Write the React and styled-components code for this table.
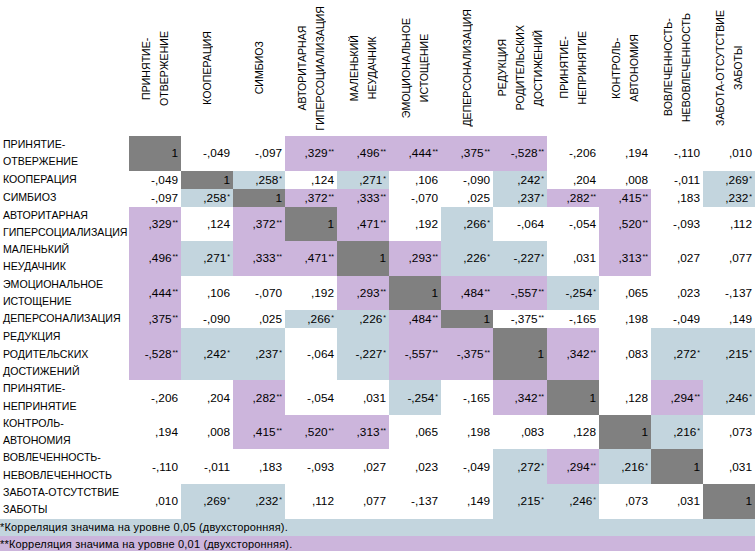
import React from "react";
import styled, { createGlobalStyle } from "styled-components";

const GlobalStyle = createGlobalStyle`
  body {
    margin: 0;
    background: #ffffff;
    font-family: "Liberation Sans", Arial, sans-serif;
    color: #000000;
  }
`;

const colors = {
  diag: "#808080",
  strong: "#ccb5dc",
  weak: "#c3d5de",
  none: "#ffffff",
};

const labels = [
  ["ПРИНЯТИЕ-", "ОТВЕРЖЕНИЕ"],
  ["КООПЕРАЦИЯ"],
  ["СИМБИОЗ"],
  ["АВТОРИТАРНАЯ", "ГИПЕРСОЦИАЛИЗАЦИЯ"],
  ["МАЛЕНЬКИЙ", "НЕУДАЧНИК"],
  ["ЭМОЦИОНАЛЬНОЕ", "ИСТОЩЕНИЕ"],
  ["ДЕПЕРСОНАЛИЗАЦИЯ"],
  ["РЕДУКЦИЯ", "РОДИТЕЛЬСКИХ", "ДОСТИЖЕНИЙ"],
  ["ПРИНЯТИЕ-", "НЕПРИНЯТИЕ"],
  ["КОНТРОЛЬ-", "АВТОНОМИЯ"],
  ["ВОВЛЕЧЕННОСТЬ-", "НЕВОВЛЕЧЕННОСТЬ"],
  ["ЗАБОТА-ОТСУТСТВИЕ", "ЗАБОТЫ"],
];

const matrix = [
  ["1", "-,049", "-,097", ",329**", ",496**", ",444**", ",375**", "-,528**", "-,206", ",194", "-,110", ",010"],
  ["-,049", "1", ",258*", ",124", ",271*", ",106", "-,090", ",242*", ",204", ",008", "-,011", ",269*"],
  ["-,097", ",258*", "1", ",372**", ",333**", "-,070", ",025", ",237*", ",282**", ",415**", ",183", ",232*"],
  [",329**", ",124", ",372**", "1", ",471**", ",192", ",266*", "-,064", "-,054", ",520**", "-,093", ",112"],
  [",496**", ",271*", ",333**", ",471**", "1", ",293**", ",226*", "-,227*", ",031", ",313**", ",027", ",077"],
  [",444**", ",106", "-,070", ",192", ",293**", "1", ",484**", "-,557**", "-,254*", ",065", ",023", "-,137"],
  [",375**", "-,090", ",025", ",266*", ",226*", ",484**", "1", "-,375**", "-,165", ",198", "-,049", ",149"],
  ["-,528**", ",242*", ",237*", "-,064", "-,227*", "-,557**", "-,375**", "1", ",342**", ",083", ",272*", ",215*"],
  ["-,206", ",204", ",282**", "-,054", ",031", "-,254*", "-,165", ",342**", "1", ",128", ",294**", ",246*"],
  [",194", ",008", ",415**", ",520**", ",313**", ",065", ",198", ",083", ",128", "1", ",216*", ",073"],
  ["-,110", "-,011", ",183", "-,093", ",027", ",023", "-,049", ",272*", ",294**", ",216*", "1", ",031"],
  [",010", ",269*", ",232*", ",112", ",077", "-,137", ",149", ",215*", ",246*", ",073", ",031", "1"],
];

// the source sheet leaves this one unshaded
const unshaded = { "6-7": true };

const Table = styled.div`
  display: grid;
  grid-template-columns: 129px repeat(12, 1fr);
  width: 755px;
  font-size: 10.6px;
`;

const HeadCorner = styled.div`
  height: 136px;
`;

const HeadCell = styled.div`
  height: 136px;
  display: flex;
  align-items: center;
  justify-content: center;
`;

const HeadText = styled.div`
  writing-mode: vertical-rl;
  transform: rotate(180deg);
  text-align: center;
  line-height: 18px;
  white-space: nowrap;
`;

const RowLabel = styled.div`
  padding: 0 0 0 3px;
  line-height: 17.3px;
  min-height: 18px;
  white-space: nowrap;
  background: #ffffff;
`;

const Cell = styled.div`
  display: flex;
  align-items: center;
  justify-content: flex-end;
  padding-right: 3px;
  font-size: 11.8px;
  background: ${({ $tone }) => colors[$tone]};
  white-space: nowrap;
`;

const Stars = styled.sup`
  font-size: 7px;
  line-height: 0;
  position: relative;
  top: -1px;
  margin-left: 1px;
`;

const Note = styled.div`
  grid-column: 1 / -1;
  height: ${({ $h }) => $h}px;
  line-height: ${({ $h }) => $h}px;
  background: ${({ $tone }) => colors[$tone]};
  font-size: 11px;
  letter-spacing: 0.18px;
  white-space: nowrap;
`;

const Lines = ({ lines }) =>
  lines.map((l, i) => (
    <React.Fragment key={i}>
      {i > 0 && <br />}
      {l}
    </React.Fragment>
  ));

const ValueCell = ({ value, row, col }) => {
  const m = value.match(/^(.*?)(\*+)?$/);
  const num = m[1];
  const stars = m[2] || "";
  let tone = "none";
  if (row === col) tone = "diag";
  else if (unshaded[`${row}-${col}`]) tone = "none";
  else if (stars === "**") tone = "strong";
  else if (stars === "*") tone = "weak";
  return (
    <Cell $tone={tone}>
      {num}
      {stars && <Stars>{stars}</Stars>}
    </Cell>
  );
};

const App = () => {
  return (
    <>
      <GlobalStyle />
      <Table>
        <HeadCorner />
        {labels.map((l, i) => (
          <HeadCell key={i}>
            <HeadText>
              <Lines lines={l} />
            </HeadText>
          </HeadCell>
        ))}

        {matrix.map((row, r) => (
          <React.Fragment key={r}>
            <RowLabel>
              <Lines lines={labels[r]} />
            </RowLabel>
            {row.map((v, c) => (
              <ValueCell key={c} value={v} row={r} col={c} />
            ))}
          </React.Fragment>
        ))}

        <Note $tone="weak" $h={17}>
          *Корреляция значима на уровне 0,05 (двухсторонняя).
        </Note>
        <Note $tone="strong" $h={16}>
          **Корреляция значима на уровне 0,01 (двухсторонняя).
        </Note>
      </Table>
    </>
  );
};

export default App;
